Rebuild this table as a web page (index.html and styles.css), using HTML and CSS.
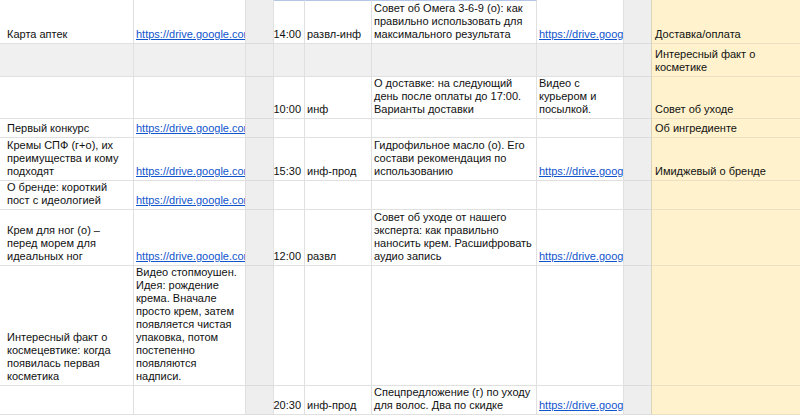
FILE: index.html
```html
<!DOCTYPE html>
<html lang="ru">
<head>
<meta charset="utf-8">
<title>Контент-план</title>
<link rel="stylesheet" href="styles.css">
</head>
<body>
<div class="sheet">
  <!-- row 1 -->
  <div class="c first">Карта аптек</div>
  <div class="c"><a class="link" href="#">https://drive.google.com</a></div>
  <div class="c sep"></div>
  <div class="c time sel">14:00</div>
  <div class="c sel">развл-инф</div>
  <div class="c sel">Совет об Омега 3-6-9 (о): как правильно использовать для максимального результата</div>
  <div class="c"><a class="link" href="#">https://drive.google.com</a></div>
  <div class="c sep sep2"></div>
  <div class="c yel">Доставка/оплата</div>

  <!-- row 2 -->
  <div class="c first shade"></div>
  <div class="c shade"></div>
  <div class="c sep"></div>
  <div class="c shade"></div>
  <div class="c shade"></div>
  <div class="c shade"></div>
  <div class="c shade"></div>
  <div class="c sep sep2"></div>
  <div class="c yel">Интересный факт о косметике</div>

  <!-- row 3 -->
  <div class="c first"></div>
  <div class="c"></div>
  <div class="c sep"></div>
  <div class="c time">10:00</div>
  <div class="c">инф</div>
  <div class="c">О доставке: на следующий день после оплаты до 17:00. Варианты доставки</div>
  <div class="c">Видео с курьером и посылкой.</div>
  <div class="c sep sep2"></div>
  <div class="c yel">Совет об уходе</div>

  <!-- row 4 -->
  <div class="c first">Первый конкурс</div>
  <div class="c"><a class="link" href="#">https://drive.google.com</a></div>
  <div class="c sep"></div>
  <div class="c"></div>
  <div class="c"></div>
  <div class="c"></div>
  <div class="c"></div>
  <div class="c sep sep2"></div>
  <div class="c yel">Об ингредиенте</div>

  <!-- row 5 -->
  <div class="c first">Кремы СПФ (г+о), их преимущества и кому подходят</div>
  <div class="c"><a class="link" href="#">https://drive.google.com</a></div>
  <div class="c sep"></div>
  <div class="c time">15:30</div>
  <div class="c">инф-прод</div>
  <div class="c">Гидрофильное масло (о). Его состави рекомендация по использованию</div>
  <div class="c"><a class="link" href="#">https://drive.google.com</a></div>
  <div class="c sep sep2"></div>
  <div class="c yel">Имиджевый о бренде</div>

  <!-- row 6 -->
  <div class="c first">О бренде: короткий пост с идеологией</div>
  <div class="c"><a class="link" href="#">https://drive.google.com</a></div>
  <div class="c sep"></div>
  <div class="c"></div>
  <div class="c"></div>
  <div class="c"></div>
  <div class="c"></div>
  <div class="c sep sep2"></div>
  <div class="c yel"></div>

  <!-- row 7 -->
  <div class="c first">Крем для ног (о) – перед морем для идеальных ног</div>
  <div class="c"><a class="link" href="#">https://drive.google.com</a></div>
  <div class="c sep"></div>
  <div class="c time">12:00</div>
  <div class="c">развл</div>
  <div class="c">Совет об уходе от нашего эксперта: как правильно наносить крем. Расшифровать аудио запись</div>
  <div class="c"><a class="link" href="#">https://drive.google.com</a></div>
  <div class="c sep sep2"></div>
  <div class="c yel"></div>

  <!-- row 8 -->
  <div class="c first">Интересный факт о космецевтике: когда появилась первая косметика</div>
  <div class="c">Видео стопмоушен. Идея: рождение крема. Вначале просто крем, затем появляется чистая упаковка, потом постепенно появляются надписи.</div>
  <div class="c sep"></div>
  <div class="c"></div>
  <div class="c"></div>
  <div class="c"></div>
  <div class="c"></div>
  <div class="c sep sep2"></div>
  <div class="c yel"></div>

  <!-- row 9 -->
  <div class="c first"></div>
  <div class="c"></div>
  <div class="c sep"></div>
  <div class="c time">20:30</div>
  <div class="c">инф-прод</div>
  <div class="c">Спецпредложение (г) по уходу для волос. Два по скидке</div>
  <div class="c"><a class="link" href="#">https://drive.google.com</a></div>
  <div class="c sep sep2"></div>
  <div class="c yel"></div>
</div>
</body>
</html>
```

FILE: styles.css
```css
html, body {
  margin: 0;
  padding: 0;
  background: #ffffff;
  overflow: hidden;
}

.sheet {
  display: grid;
  grid-template-columns: 134px 112px 28px 31px 67px 165px 87px 28px 1fr;
  grid-template-rows: 44px 33px 42px 19px 43px 29px 56px 120px 29px;
  width: 800px;
  font-family: "Liberation Sans", Arial, sans-serif;
  font-size: 11px;
  line-height: 13px;
  color: #111111;
}

.c {
  box-sizing: border-box;
  border-right: 1px solid #e0e0e0;
  border-bottom: 1px solid #e0e0e0;
  padding: 0 2px 2px 2px;
  display: flex;
  align-items: flex-end;
  overflow: hidden;
  min-width: 0;
}

.first {
  padding-left: 7px;
}

.shade {
  background: #f0f0f0;
}

.sep {
  background: #eeeeee;
  border-bottom-color: #dcdcdc;
}

.sep2 {
  border-right-color: #dcd3b8;
}

.yel {
  background: #fff2cc;
  border-right: none;
  border-bottom-color: #ebe0c2;
  padding-left: 3px;
}

.time {
  justify-content: flex-end;
  padding-left: 0;
  padding-right: 3px;
  overflow: visible;
  white-space: nowrap;
}

.sel {
  border-top: 1px solid #b4c6e6;
}

.link {
  color: #1155cc;
  text-decoration: underline;
  white-space: nowrap;
}
```
